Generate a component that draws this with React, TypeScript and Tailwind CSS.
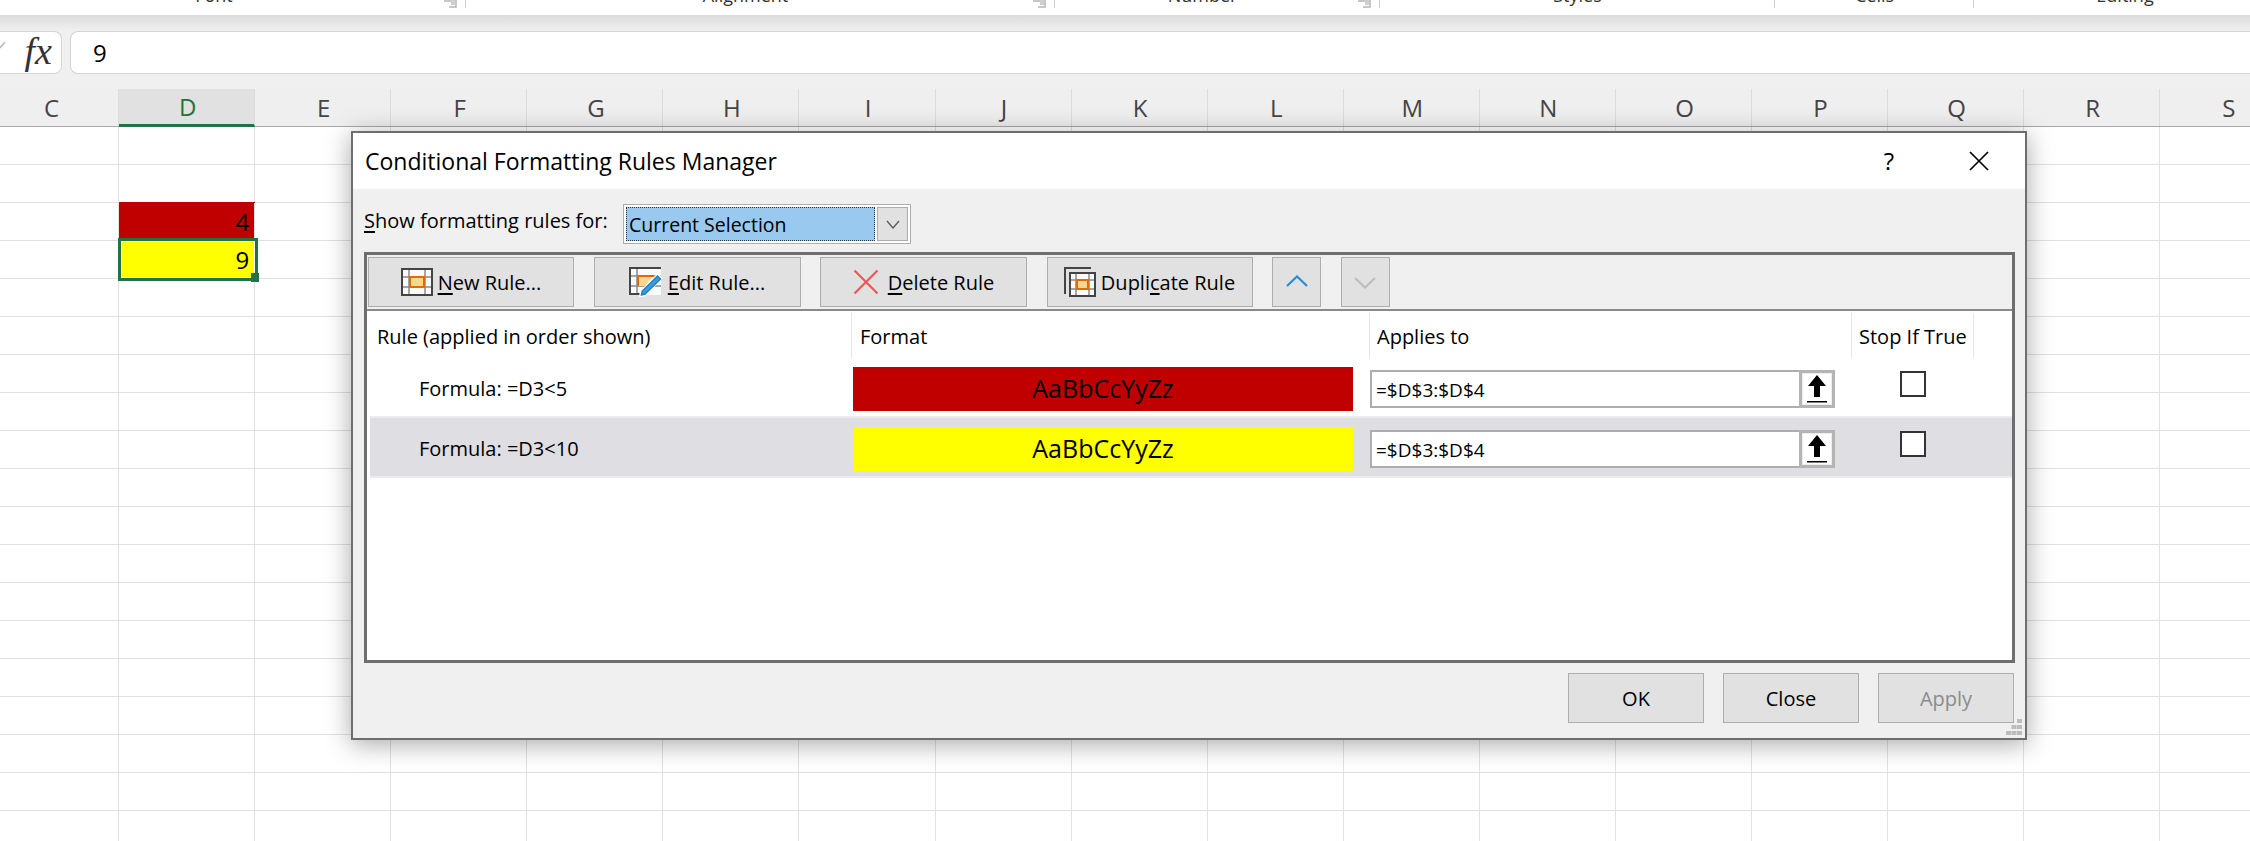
const COLUMNS = ['C', 'D', 'E', 'F', 'G', 'H', 'I', 'J', 'K', 'L', 'M', 'N', 'O', 'P', 'Q', 'R', 'S'];
const ROWS = Array.from({ length: 19 }, (_, i) => i + 1);

const RIBBON_GROUPS = [
  { label: 'Font', width: 'w-[474px] -ml-[8px]', launcher: true },
  { label: 'Alignment', width: 'w-[589px]', launcher: true },
  { label: 'Number', width: 'w-[325px]', launcher: true },
  { label: 'Styles', width: 'w-[395px]', launcher: false },
  { label: 'Cells', width: 'w-[199px]', launcher: false },
  { label: 'Editing', width: 'w-[302px]', launcher: false },
];

function TableIcon() {
  return (
    <svg width="32" height="28" viewBox="0 0 32 28" className="shrink-0">
      <rect x="0" y="0" width="32" height="28" fill="#fafafa" />
      <path d="M0 9H32M0 19H32M8 0V28M24 0V28" stroke="#8a8a8a" strokeWidth="1.500" />
      <rect x="1" y="1" width="30" height="26" fill="none" stroke="#444" strokeWidth="2" />
      <rect x="9" y="9" width="14" height="10" fill="#fad78e" stroke="#e06c00" strokeWidth="2" />
    </svg>
  );
}

function EditIcon() {
  return (
    <svg width="34" height="30" viewBox="0 0 34 30" className="shrink-0">
      <rect x="0" y="0" width="32" height="28" fill="#fafafa" />
      <path d="M0 9H32M0 19H32M8 0V28" stroke="#8a8a8a" strokeWidth="1.500" />
      <path d="M32 1H1V27H12" fill="none" stroke="#444" strokeWidth="2" />
      <path d="M9 9h15l-8 10H9z" fill="#fad78e" />
      <path d="M9 19V9H25" fill="none" stroke="#e06c00" strokeWidth="2" />
      <path d="M29 7.500l3.500 3.500L16 28l-5 1.500 1-5z" fill="#fff" stroke="#fff" strokeWidth="2" />
      <path d="M28.500 9l3 3L16 27l-3.500 1 .8-4z" fill="#3b9ddd" stroke="#1f7fc4" strokeWidth="1.500" />
    </svg>
  );
}

function DuplicateIcon() {
  return (
    <svg width="32" height="30" viewBox="0 0 32 30" className="shrink-0">
      <path d="M1 27V1H27" fill="none" stroke="#444" strokeWidth="2" />
      <rect x="5" y="5" width="27" height="25" fill="#fafafa" />
      <path d="M5 13H32M5 22H32M12 5V30M25 5V30" stroke="#8a8a8a" strokeWidth="1.500" />
      <rect x="6" y="6" width="25" height="23" fill="none" stroke="#444" strokeWidth="2" />
      <rect x="13" y="13" width="11" height="9" fill="#fad78e" stroke="#e06c00" strokeWidth="2" />
    </svg>
  );
}

function ToolButton({ width, children }: { width: string; children: React.ReactNode }) {
  return (
    <button className={`${width} h-[50px] shrink-0 flex items-center justify-center gap-[5px] bg-[#e1e1e1] border border-[#adadad] text-[20px] text-black`}>
      {children}
    </button>
  );
}

function DialogButton({ label, disabled }: { label: string; disabled?: boolean }) {
  return (
    <button className={`w-[136px] h-[50px] pt-[2px] bg-[#e1e1e1] border border-[#adadad] text-[20px] ${disabled ? 'text-[#8c8c8c]' : 'text-black'}`}>
      {label}
    </button>
  );
}

function RangeInput() {
  return (
    <div className="w-[465px] h-[38px] flex items-stretch bg-white border-2 border-[#adadad] border-r-0">
      <span className="flex-1 pl-[4px] text-[19px] leading-[37px] text-black">=$D$3:$D$4</span>
      <span className="w-[36px] -my-[2px] shrink-0 flex items-center justify-center bg-white border-[3px] border-[#b4b4b4] outline outline-1 -outline-offset-4 outline-[#eeeeee]">
        <svg width="20" height="30" viewBox="0 0 20 30">
          <path d="M10 1L19 12H13V23H7V12H1z" fill="#000" />
          <rect x="0" y="27" width="20" height="1.500" fill="#000" />
        </svg>
      </span>
    </div>
  );
}

function RuleRow({ formula, swatch, selected }: { formula: string; swatch: string; selected?: boolean }) {
  return (
    <div className={`grid grid-cols-[482px_518px_482px_122px] pt-[9px] ${selected ? 'h-[62px] bg-[#dedee3] border-y-2 border-[#ececef]' : 'h-[58px]'}`}>
      <div className="pl-[49px] pt-[7px] text-[20px] leading-[30px] text-black">{formula}</div>
      <div className="pl-[1px]">
        <div className={`${swatch} w-[500px] h-[44px] flex items-center justify-center text-[25px] text-black`}>AaBbCcYyZz</div>
      </div>
      <div className="pt-[3px]">
        <RangeInput />
      </div>
      <div className="flex justify-center pt-[4px]">
        <span className="w-[26px] h-[26px] bg-white border-2 border-[#333333]" />
      </div>
    </div>
  );
}

function RulesDialog() {
  return (
    <div className="absolute left-[351px] top-[131px] z-20 w-[1676px] h-[609px] flex flex-col bg-[#f0f0f0] border-2 border-[#6e6e6e] shadow-[0_4px_24px_rgba(0,0,0,0.35)]">
      <div className="h-[56px] shrink-0 flex items-center bg-white pl-[12px] text-black">
        <span className="flex-1 text-[23px]">Conditional Formatting Rules Manager</span>
        <span className="text-[24px] mr-[75px]">?</span>
        <svg width="20" height="20" viewBox="0 0 20 20" className="mr-[36px]">
          <path d="M1 1L19 19M19 1L1 19" stroke="#000" strokeWidth="1.700" />
        </svg>
      </div>

      <div className="h-[63px] shrink-0 flex items-start pl-[11px] pt-[15px]">
        <span className="w-[259px] pt-[2px] text-[20px] leading-[30px] text-black">
          <span className="underline underline-offset-[3px]">S</span>how formatting rules for:
        </span>
        <div className="w-[288px] h-[40px] flex items-stretch gap-[2px] bg-white border border-[#adadad] p-[2px]">
          <span className="w-[249px] bg-[#99c9ef] border border-dotted border-[#333] pl-[2px] text-[19.500px] leading-[34px] text-black">
            Current Selection
          </span>
          <span className="flex-1 flex items-center justify-center bg-[#e1e1e1] border border-[#adadad]">
            <svg width="14" height="9" viewBox="0 0 14 9">
              <path d="M1 1L7 8L13 1" fill="none" stroke="#555" strokeWidth="1.200" />
            </svg>
          </span>
        </div>
      </div>

      <div className="ml-[11px] w-[1651px] h-[411px] shrink-0 flex flex-col border-[3px] border-[#6e6e6e]">
        <div className="h-[56px] shrink-0 flex items-start gap-[19.500px] pt-[2px] pl-[1px] border-b-2 border-[#8a8a8a]">
          <ToolButton width="w-[206px]">
            <TableIcon />
            <span className="pt-[2px]"><span className="underline underline-offset-[3px]">N</span>ew Rule...</span>
          </ToolButton>
          <ToolButton width="w-[207px]">
            <EditIcon />
            <span className="pt-[2px]"><span className="underline underline-offset-[3px]">E</span>dit Rule...</span>
          </ToolButton>
          <ToolButton width="w-[207px]">
            <svg width="26" height="26" viewBox="0 0 26 26" className="shrink-0 mr-[4px]">
              <path d="M1.500 1.500L24.500 24.500M24.500 1.500L1.500 24.500" stroke="#ef5555" strokeWidth="2.200" />
            </svg>
            <span className="pt-[2px]"><span className="underline underline-offset-[3px]">D</span>elete Rule</span>
          </ToolButton>
          <ToolButton width="w-[206px]">
            <DuplicateIcon />
            <span className="pt-[2px]">Dupli<span className="underline underline-offset-[3px]">c</span>ate Rule</span>
          </ToolButton>
          <ToolButton width="w-[49px]">
            <svg width="22" height="12" viewBox="0 0 22 12" className="-mt-[2px]">
              <path d="M1 11L11 1.500L21 11" fill="none" stroke="#2a8dd4" strokeWidth="2.200" />
            </svg>
          </ToolButton>
          <ToolButton width="w-[49px]">
            <svg width="22" height="12" viewBox="0 0 22 12" className="mt-[2px]">
              <path d="M1 1L11 10.500L21 1" fill="none" stroke="#bdbdbd" strokeWidth="2.200" />
            </svg>
          </ToolButton>
        </div>

        <div className="flex-1 bg-white pl-[3px] pt-[2px] text-black">
          <div className="grid grid-cols-[482px_518px_482px_122px] h-[45px] text-[20px] items-center">
            <div className="h-full flex items-center pl-[7px] pt-[2px] border-r border-[#e6e6e6]">Rule (applied in order shown)</div>
            <div className="h-full flex items-center pl-[8px] pt-[2px] border-r border-[#e6e6e6]">Format</div>
            <div className="h-full flex items-center pl-[7px] pt-[2px] border-r border-[#e6e6e6]">Applies to</div>
            <div className="h-full flex items-center pl-[7px] pt-[2px] border-r border-[#e6e6e6]">Stop If True</div>
          </div>
          <RuleRow formula="Formula: =D3<5" swatch="bg-[#c00000]" />
          <RuleRow formula="Formula: =D3<10" swatch="bg-[#ffff00]" selected />
        </div>
      </div>

      <div className="flex justify-end gap-[19px] pt-[10px] pr-[11px]">
        <DialogButton label="OK" />
        <DialogButton label="Close" />
        <DialogButton label="Apply" disabled />
      </div>

      <svg width="16" height="16" viewBox="0 0 16 16" className="absolute right-[3px] bottom-[3px]">
        <path d="M11 0h5v4h-5zM5.500 6h5v4h-5zM11 6h5v4h-5zM0 12h5v4H0zM5.500 12h5v4h-5zM11 12h5v4h-5z" fill="#bcbcbc" />
      </svg>
    </div>
  );
}

export default function App() {
  return (
    <div className="relative w-[2250px] h-[841px] overflow-hidden bg-white font-['Open_Sans',sans-serif]">
      {/* ribbon, only its bottom edge is in view */}
      <div className="h-[15px] flex overflow-hidden bg-white text-[18px] text-[#333]">
        {RIBBON_GROUPS.map((g) => (
          <div key={g.label} className={`${g.width} shrink-0 relative h-[15px] flex justify-center ${g.launcher ? 'pr-[30px]' : ''}`}>
            <span className="-mt-[17px] leading-[24px]">{g.label}</span>
            <span className="absolute right-0 top-0 w-px h-[8px] bg-[#d0d0d0]" />
            {g.launcher && (
              <svg width="20" height="8" viewBox="0 0 20 8" className="absolute right-[3px] top-0">
                <path d="M1 1H8M13 0V7H6" fill="none" stroke="#b5b5b5" strokeWidth="1.500" />
                <rect x="8" y="0" width="4" height="5" fill="#cfcfcf" />
              </svg>
            )}
          </div>
        ))}
      </div>

      {/* formula bar */}
      <div className="h-[74px] bg-[linear-gradient(#dcdcdc,#f0f0f0_16px)] pt-[16px]">
        <div className="h-[43px] flex gap-[8px]">
          <div className="w-[62px] h-full shrink-0 flex items-center justify-end pr-[9px] bg-white border border-l-0 border-[#d4d4d4] rounded-r-[8px] relative">
            <svg width="6" height="8" viewBox="0 0 6 8" className="absolute left-0 top-[9px]">
              <path d="M0 7L5 1" stroke="#b8b8b8" strokeWidth="1.500" />
            </svg>
            <span className="font-['Liberation_Serif',serif] italic text-[38px] leading-none text-[#333] -mt-[4px]">fx</span>
          </div>
          <div className="flex-1 h-full flex items-center pl-[22px] bg-white border border-r-0 border-[#d4d4d4] rounded-l-[8px] text-[24px] text-black">9</div>
        </div>
      </div>

      {/* column headers */}
      <div className="h-[38px] flex -ml-[17px] bg-[#efefef] border-b border-[#a8a8a8]">
        {COLUMNS.map((c) => (
          <div
            key={c}
            className={`w-[136.08px] shrink-0 flex items-center justify-center pl-[2px] text-[24px] border-r border-[#dcdcdc] ${c === 'D' ? 'bg-[#e1e1e1] text-[#217346] border-b-[3px] border-b-[#217346] h-[38px]' : 'text-[#444]'}`}
          >
            {c}
          </div>
        ))}
      </div>

      {/* cells */}
      {ROWS.map((r) => (
        <div key={r} className="h-[38px] flex -ml-[17px]">
          {COLUMNS.map((c) => {
            const isRed = c === 'D' && r === 3;
            const isYellow = c === 'D' && r === 4;
            return (
              <div
                key={c}
                className={`relative w-[136.08px] shrink-0 flex items-center justify-end pr-[5px] text-[24px] text-black border-r border-b border-[#e1e1e1] ${isRed ? 'bg-[#c00000] shadow-[0_-1px_0_#c00000]' : isYellow ? 'bg-[#ffff00] z-10' : 'bg-white'}`}
              >
                {isRed && '4'}
                {isYellow && (
                  <>
                    9
                    <span className="absolute -left-[1px] -top-[3px] -right-[4px] -bottom-[3px] border-[3px] border-[#217346] outline outline-1 -outline-offset-4 outline-white" />
                    <span className="absolute -right-[5px] -bottom-[4px] w-[8px] h-[9px] bg-[#217346]" />
                  </>
                )}
              </div>
            );
          })}
        </div>
      ))}

      <RulesDialog />
    </div>
  );
}
